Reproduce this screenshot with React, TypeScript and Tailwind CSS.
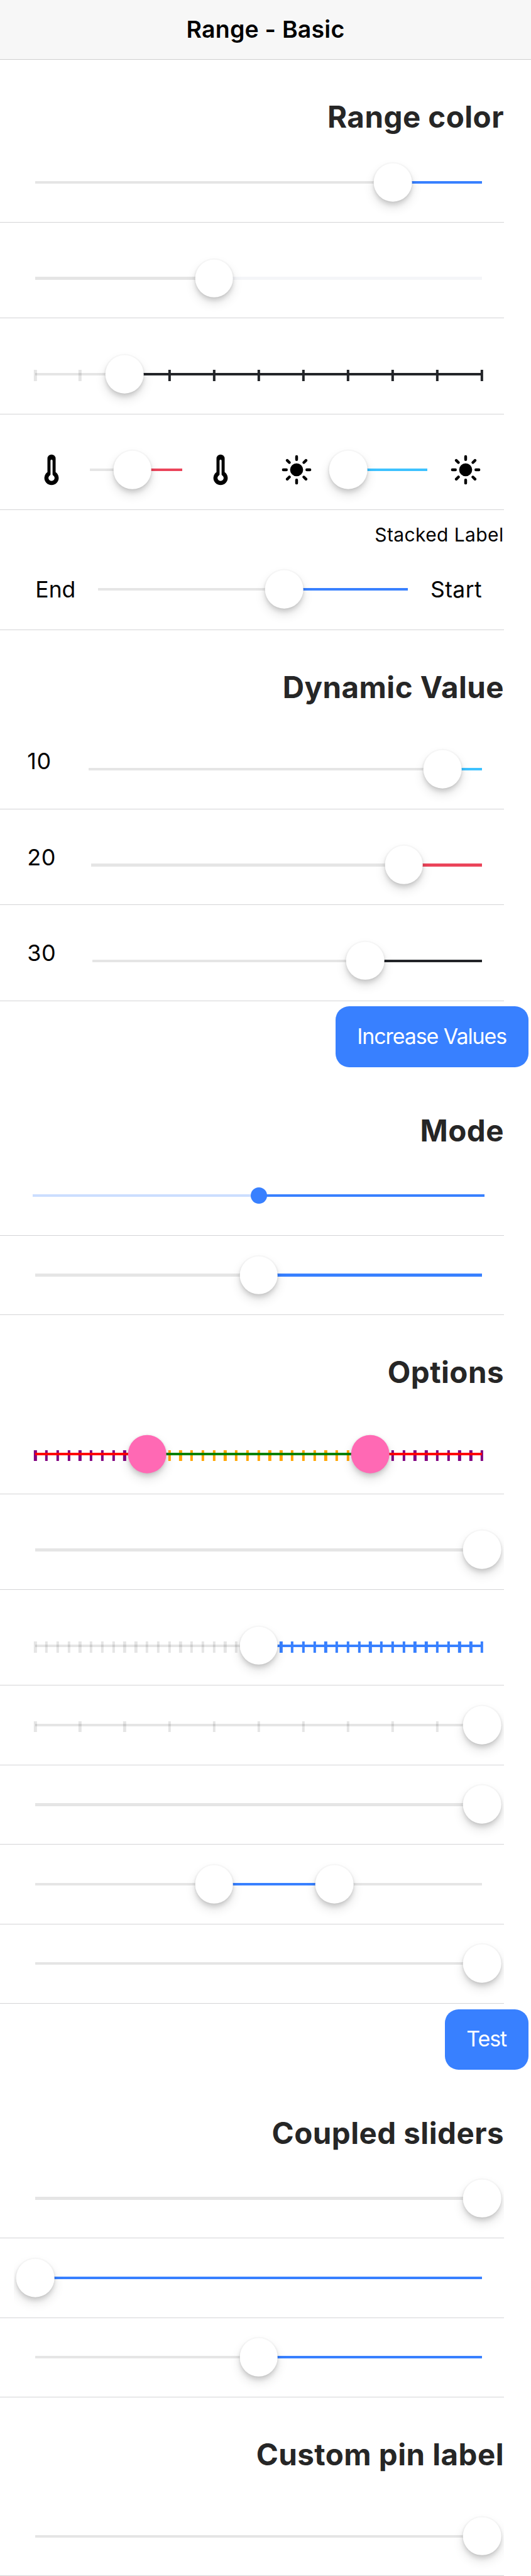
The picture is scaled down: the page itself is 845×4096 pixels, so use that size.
import type { ReactNode } from "react";
import { IoSunny } from "react-icons/io5";

type Tone = "primary" | "light" | "dark" | "danger" | "secondary";

const activeBar: Record<Tone, string> = {
  primary: "bg-[#3880ff]",
  light: "bg-[#f4f5f8]",
  dark: "bg-[#222428]",
  danger: "bg-[#eb445a]",
  secondary: "bg-[#3dc2ff]",
};

interface RangeProps {
  tone?: Tone;
  from: number;
  to?: number;
  steps?: number;
  custom?: boolean;
}

/* The track runs right to left: the active part lies between `from` and `to`, in percent from the left. */
function Track({ tone = "primary", from, to, steps, custom }: RangeProps) {
  const end = to ?? 100;
  const ticks = steps ? Array.from({ length: steps + 1 }, (_, i) => (i * 100) / steps) : [];
  const knobs = to === undefined ? [from] : [from, to];
  return (
    <div className="relative h-[4.33px] min-w-0 flex-1">
      {ticks.map((p) => {
        const on = p >= from && p <= end;
        const colour = custom ? (on ? "bg-[orange]" : "bg-[purple]") : on ? activeBar[tone] : "bg-black/10";
        return (
          <div
            key={p}
            className={`absolute -top-[4.33px] h-[17.33px] w-[4.33px] -translate-x-1/2 ${colour}`}
            style={{ left: `${p}%` }}
          />
        );
      })}
      <div className={`absolute inset-0 ${custom ? "bg-[red]" : "bg-black/10"}`} />
      <div
        className={`absolute inset-y-0 ${custom ? "bg-[green]" : activeBar[tone]}`}
        style={{ left: `${from}%`, right: `${100 - end}%` }}
      />
      {knobs.map((p) => (
        <div
          key={p}
          className={`absolute top-1/2 size-[60.67px] -translate-1/2 rounded-full shadow-[0_5px_7px_rgba(0,0,0,0.12),0_8.67px_17.33px_rgba(0,0,0,0.12),0_0_0_2.17px_rgba(0,0,0,0.02)] ${custom ? "bg-[#ff69b4]" : "bg-white"}`}
          style={{ left: `${p}%` }}
        />
      ))}
    </div>
  );
}

function Range({ start, end, ...track }: RangeProps & { start?: ReactNode; end?: ReactNode }) {
  return (
    <div className="flex h-[125.39px] min-w-0 flex-1 items-center gap-[34.67px] overflow-x-clip px-[34.67px]">
      {end}
      <Track {...track} />
      {start}
    </div>
  );
}

function Row({ pin, children }: { pin?: boolean; children: ReactNode }) {
  return (
    <div
      className={`mr-[43.33px] flex items-end border-b border-[#d4d4d6] pl-[21.67px] ${pin ? "h-[152.36px]" : "h-[126.36px]"}`}
    >
      {children}
    </div>
  );
}

function ValueRow({ value, tone, from, labelWidth }: { value: number; tone: Tone; from: number; labelWidth: string }) {
  return (
    <div className="mr-[43.33px] flex h-[152.36px] items-end border-b border-[#d4d4d6] pl-[43.33px]">
      <span className={`mb-[55.6px] text-[36px] leading-[40px] tracking-[0.5px] ${labelWidth}`}>{value}</span>
      <Range tone={tone} from={from} />
    </div>
  );
}

function Heading({ children }: { children: ReactNode }) {
  return (
    <h2 className="flex h-[132.17px] items-end justify-end pr-[43px] pb-[13px] text-[47.5px] leading-[56px] font-bold tracking-[0.45px] text-[#262626]">
      {children}
    </h2>
  );
}

function Button({ width, children }: { width: string; children: ReactNode }) {
  return (
    <div className="flex h-[114.83px] items-start justify-end pt-[8.67px] pr-[4.33px]">
      <button
        className={`flex h-[96.6px] items-center justify-center rounded-[21.67px] bg-[#3880ff] pb-[2.4px] text-[34px] tracking-[-1.1px] whitespace-nowrap text-white ${width}`}
      >
        {children}
      </button>
    </div>
  );
}

function Thermometer() {
  return (
    <svg viewBox="0 0 512 512" className="size-[52px] shrink-0">
      <path d="M192 80a64 64 0 0 1 128 0v212a112 112 0 1 1-128 0z" />
      <path d="M240 112a16 16 0 0 1 32 0v216q0 8 7 13a48 48 0 1 1-46 0q7-5 7-13z" fill="#fff" />
    </svg>
  );
}

const Sun = () => <IoSunny className="size-[52px] shrink-0" />;

export default function App() {
  return (
    <div className="h-[4096px] w-[845px] overflow-hidden bg-white font-['Inter',sans-serif] text-black">
      <header className="flex h-[95.33px] items-center justify-center border-b border-[#cfcfcf] bg-[#f7f7f7] text-[37.5px] font-semibold tracking-[0.2px]">
        Range - Basic
      </header>

      <Heading>Range color</Heading>
      <Row>
        <Range from={80} />
      </Row>
      <Row pin>
        <Range tone="light" from={40} />
      </Row>
      <Row pin>
        <Range tone="dark" from={20} steps={10} />
      </Row>
      <Row pin>
        <Range tone="danger" from={46} start={<Thermometer />} end={<Thermometer />} />
        <Range tone="secondary" from={14.2} start={<Sun />} end={<Sun />} />
      </Row>
      <div className="mr-[43.33px] flex h-[191.39px] flex-col justify-end border-b border-[#d4d4d6] pl-[21.67px]">
        <div className="mb-[7.5px] text-right text-[30px] leading-[34px] tracking-[0.4px]">Stacked Label</div>
        <div className="mb-[1.4px] flex">
          <Range
            from={60}
            start={<span className="w-[83px] text-right text-[35.5px] tracking-[0.4px]">Start</span>}
            end={<span className="w-[64.8px] text-[35.5px]">End</span>}
          />
        </div>
      </div>

      <Heading>Dynamic Value</Heading>
      <ValueRow value={10} tone="secondary" from={90} labelWidth="w-[62.6px]" />
      <ValueRow value={20} tone="danger" from={80} labelWidth="w-[66.9px]" />
      <ValueRow value={30} tone="dark" from={70} labelWidth="w-[69px]" />
      <Button width="w-[307px]">Increase Values</Button>

      <Heading>Mode</Heading>
      <Row>
        <div className="flex h-[125.39px] flex-1 items-center px-[30.33px]">
          <div className="relative h-[4.33px] flex-1 bg-[#3880ff]/26">
            <div className="absolute inset-y-0 right-0 left-1/2 bg-[#3880ff]" />
            <div className="absolute top-1/2 left-1/2 size-[26px] -translate-1/2 rounded-full bg-[#3880ff]" />
          </div>
        </div>
      </Row>
      <Row>
        <Range from={50} />
      </Row>

      <Heading>Options</Heading>
      <Row pin>
        <Range from={25} to={75} steps={40} custom />
      </Row>
      <Row pin>
        <Range from={100} />
      </Row>
      <Row pin>
        <Range from={50} steps={40} />
      </Row>
      <Row>
        <Range from={100} steps={10} />
      </Row>
      <Row>
        <Range from={100} />
      </Row>
      <Row>
        <Range from={40} to={67} />
      </Row>
      <Row>
        <Range from={100} />
      </Row>
      <Button width="w-[133px]">Test</Button>

      <Heading>Coupled sliders</Heading>
      <Row>
        <Range from={100} />
      </Row>
      <Row>
        <Range from={0} />
      </Row>
      <Row>
        <Range from={50} />
      </Row>

      <Heading>Custom pin label</Heading>
      <Row pin>
        <Range from={100} />
      </Row>
    </div>
  );
}
